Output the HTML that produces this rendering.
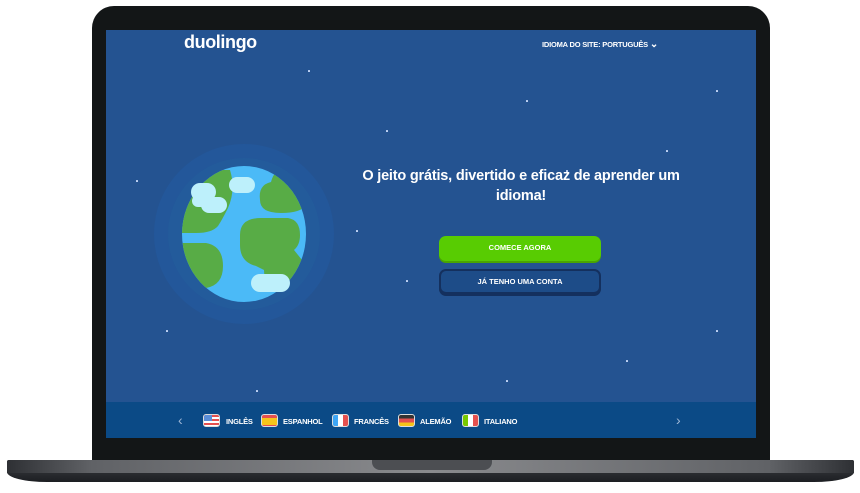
<!DOCTYPE html>
<html><head><meta charset="utf-8"><style>
*{margin:0;padding:0;box-sizing:border-box}
body{width:860px;height:493px;background:#fff;position:relative;overflow:hidden;font-family:"Liberation Sans",sans-serif}
.lid{position:absolute;left:92px;top:6px;width:678px;height:458px;background:#131617;border-radius:22px 22px 0 0}
.screen{position:absolute;left:106px;top:30px;width:650px;height:408px;background:#245391;overflow:hidden}
.base{position:absolute;left:7px;top:460px;width:847px;height:22px;border-radius:2px 2px 40px 40px/2px 2px 10px 10px;background:linear-gradient(#2a2c30 0,#2a2c30 13px,#1c1e22 22px)}
.base:before{content:"";position:absolute;left:0;right:0;top:0;height:13px;border-radius:2px 2px 0 0;background:linear-gradient(90deg,#2e3034,#606266 10%,#8a8b8e 50%,#606266 90%,#2e3034)}
.notch{position:absolute;left:372px;top:460px;width:120px;height:10px;background:#4c4e52;border-radius:0 0 8px 8px}
.logo{position:absolute;left:78px;top:2px;color:#fff;font-weight:bold;font-size:18px;letter-spacing:-0.4px}
.site{position:absolute;left:436px;top:9px;color:#fff;font-weight:bold;font-size:7.5px;letter-spacing:-0.2px}
h1{position:absolute;left:240px;width:350px;top:136px;text-align:center;color:#fff;font-size:14.5px;line-height:20px;font-weight:bold;letter-spacing:-0.2px}
.btn{position:absolute;left:333px;width:162px;height:25px;border-radius:7px;color:#fff;font-weight:bold;font-size:7.5px;text-align:center;line-height:24px}
.g{top:206px;background:#58cc02;box-shadow:0 2px 0 #4aa502}
.b{top:239px;border:2px solid #14305e;background:#1d4c88;line-height:21px;box-shadow:0 2px 0 #14305e}
.foot{position:absolute;left:0;top:372px;width:650px;height:36px;background:#0b4a86;color:#fff;font-size:7.5px;font-weight:bold;letter-spacing:-0.2px}
.foot span{position:absolute;top:15px}
.fl{position:absolute;top:12px;width:17px;height:13px;border-radius:3px;border:1px solid #ddd;overflow:hidden}
.st{position:absolute;width:1.5px;height:1.5px;background:#cfe0ff;border-radius:50%}
</style></head><body>
<div class="lid"></div>
<div class="screen">
<div class="logo">duolingo</div>
<div class="site">IDIOMA DO SITE: PORTUGUÊS <span style="font-size:10px">&#8964;</span></div>
<div class="st" style="left:202px;top:40px"></div><div class="st" style="left:280px;top:100px"></div><div class="st" style="left:420px;top:70px"></div><div class="st" style="left:560px;top:120px"></div><div class="st" style="left:610px;top:60px"></div><div class="st" style="left:300px;top:250px"></div><div class="st" style="left:520px;top:330px"></div><div class="st" style="left:60px;top:300px"></div><div class="st" style="left:30px;top:150px"></div><div class="st" style="left:610px;top:300px"></div><div class="st" style="left:400px;top:350px"></div><div class="st" style="left:150px;top:360px"></div><div class="st" style="left:460px;top:140px"></div><div class="st" style="left:250px;top:200px"></div>
<svg style="position:absolute;left:0;top:0" width="300" height="400">
<circle cx="138" cy="204" r="90" fill="#23579a"/>
<circle cx="138" cy="204" r="76" fill="#235b9b"/>
<clipPath id="c"><ellipse cx="138" cy="204" rx="62" ry="68"/></clipPath>
<ellipse cx="138" cy="204" rx="62" ry="68" fill="#4bbaf7"/>
<g clip-path="url(#c)" fill="#58ac46">
<path d="M70 140 L124 140 Q130 160 122 178 Q116 190 112 196 Q106 203 90 203 L70 203Z"/>
<path d="M154 170 Q152 155 165 152 Q168 140 178 138 Q200 150 200 175 Q195 183 175 183 Q154 183 154 170Z"/>
<path d="M134 205 Q134 188 155 188 L182 188 Q194 190 194 205 Q194 215 188 220 L200 235 Q192 262 172 262 Q158 255 158 240 L150 236 Q134 232 134 215Z"/>
<path d="M70 213 L100 213 Q117 216 117 236 Q117 255 100 258 L70 258Z"/>
</g>
<g fill="#bdf0fb"><rect x="123" y="147" width="26" height="16" rx="8"/><rect x="85" y="153" width="25" height="18" rx="9"/><rect x="95" y="167" width="26" height="16" rx="8"/><rect x="86" y="165" width="20" height="12" rx="6"/><rect x="145" y="244" width="39" height="18" rx="9"/></g>
</svg>
<h1>O jeito grátis, divertido e eficaz de aprender um idioma!</h1>
<div class="btn g">COMECE AGORA</div>
<div class="btn b">JÁ TENHO UMA CONTA</div>
<div class="foot">
<span style="left:72px;top:10px;font-size:14px;font-weight:normal;color:#9fb7d6">‹</span>
<div class="fl" style="left:97px;background:repeating-linear-gradient(#e5504f 0 2px,#fff 2px 4px)"><div style="width:8px;height:6px;background:#5a8ed8"></div></div><span style="left:120px">INGLÊS</span>
<div class="fl" style="left:155px;background:linear-gradient(#e5504f 0 3px,#f6c51b 3px 10px,#e5504f 10px)"></div><span style="left:177px">ESPANHOL</span>
<div class="fl" style="left:226px;background:linear-gradient(90deg,#3fa6f5 33%,#fff 33% 66%,#e5504f 66%)"></div><span style="left:248px">FRANCÊS</span>
<div class="fl" style="left:292px;background:linear-gradient(#333 33%,#e5504f 33% 66%,#f6c51b 66%)"></div><span style="left:314px">ALEMÃO</span>
<div class="fl" style="left:356px;background:linear-gradient(90deg,#78c800 33%,#fff 33% 66%,#e5504f 66%)"></div><span style="left:378px">ITALIANO</span>
<span style="left:570px;top:10px;font-size:14px;font-weight:normal;color:#9fb7d6">›</span>
</div>
</div>
<div class="base"></div>
<div class="notch"></div>
</body></html>
